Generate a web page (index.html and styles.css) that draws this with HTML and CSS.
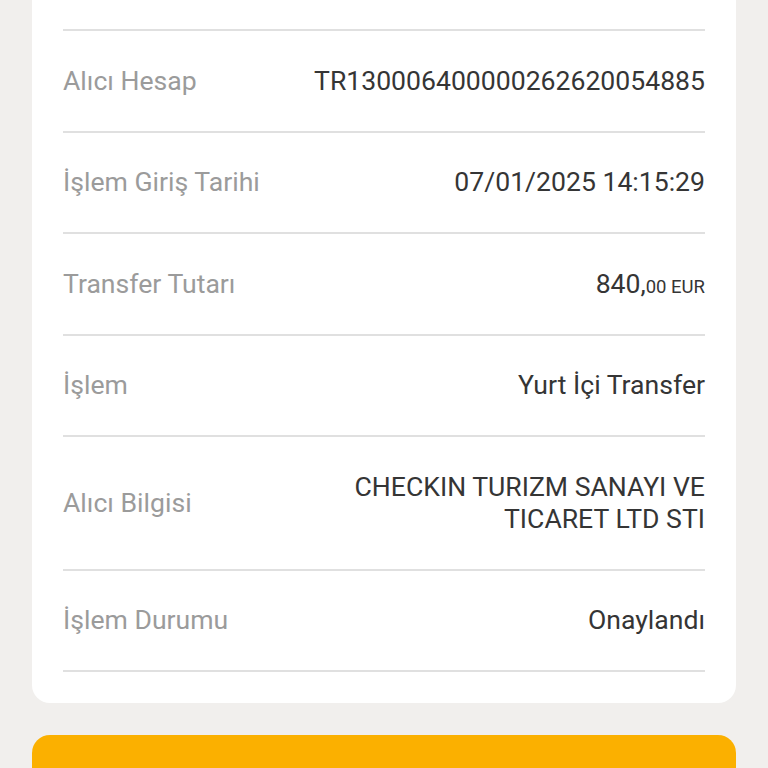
FILE: index.html
```html
<!DOCTYPE html>
<html lang="tr">
<head>
    <meta charset="UTF-8">
    <meta name="viewport" content="width=device-width, initial-scale=1.0">
    <title>İşlem Detayı</title>
    <link rel="stylesheet" href="styles.css">
</head>
<body>

    <div class="card">
        <div class="row">
            <span class="label">Alıcı Hesap</span>
            <span class="value">TR130006400000262620054885</span>
        </div>
        <div class="row">
            <span class="label">İşlem Giriş Tarihi</span>
            <span class="value">07/01/2025 14:15:29</span>
        </div>
        <div class="row">
            <span class="label">Transfer Tutarı</span>
            <span class="value">840,<small class="decimals">00 EUR</small></span>
        </div>
        <div class="row">
            <span class="label">İşlem</span>
            <span class="value">Yurt İçi Transfer</span>
        </div>
        <div class="row">
            <span class="label">Alıcı Bilgisi</span>
            <span class="value wide">CHECKIN TURIZM SANAYI VE TICARET LTD STI</span>
        </div>
        <div class="row">
            <span class="label">İşlem Durumu</span>
            <span class="value">Onaylandı</span>
        </div>
    </div>

    <button class="button" type="button"></button>

</body>
</html>
```

FILE: styles.css
```css
body {
    font-family: Roboto, "Noto Sans", sans-serif;
    background-color: #f1efed;
    margin: 0;
    padding: 0 32px 32px;
}
.card {
    background-color: white;
    border-radius: 18px;
    margin-top: -20px;
    padding: 49px 31px 31px;
}
.row {
    display: flex;
    justify-content: space-between;
    align-items: center;
    gap: 24px;
    border-bottom: 2px solid #e0e0e0;
    padding: 33.75px 0;
    font-size: 26.6px;
    line-height: 32px;
}
.row:first-child {
    border-top: 2px solid #e0e0e0;
}
.label {
    color: #9b9b9b;
    white-space: nowrap;
}
.value {
    color: #353535;
    text-align: right;
}
.value.wide {
    max-width: 380px;
}
.decimals {
    font-size: 18.5px;
    line-height: 0;
}
.button {
    display: block;
    width: 100%;
    height: 64px;
    margin-top: 32px;
    background-color: #fbb000;
    border: none;
    border-radius: 18px;
}
```
